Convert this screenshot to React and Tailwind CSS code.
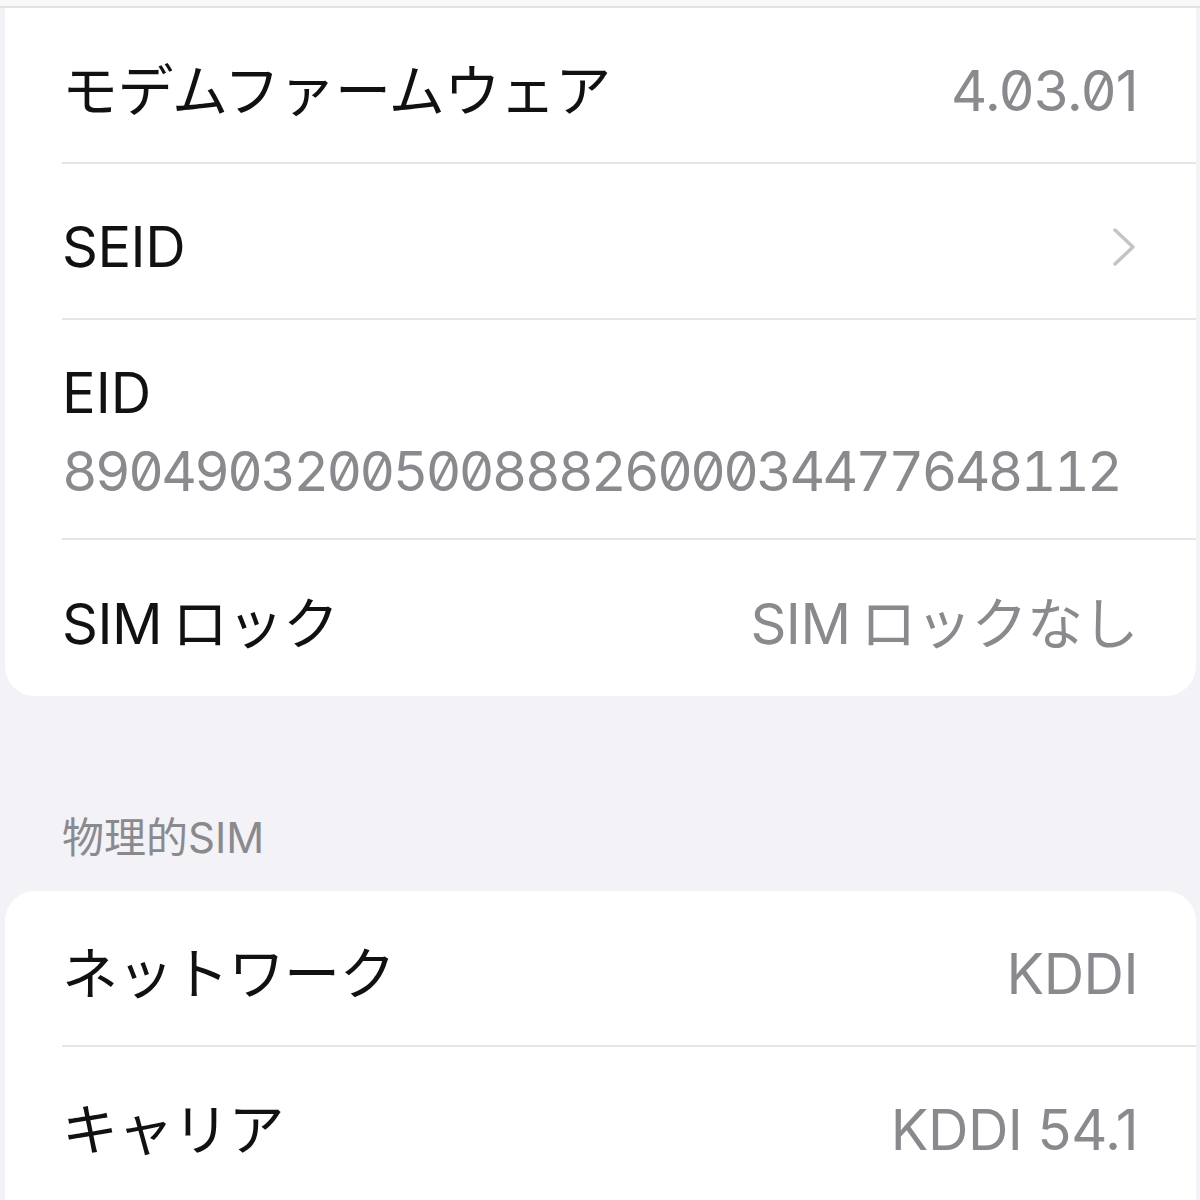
import React from 'react';

const font = { fontFamily: '"Inter", "Noto Sans CJK JP", sans-serif' };

function Chevron() {
    return (
        <svg width="26" height="40" viewBox="0 0 26 40" fill="none" className="mr-[1px]">
            <path d="M4 3 L22 20 L4 37" stroke="#c4c4c7" strokeWidth="3.5" strokeLinecap="round" strokeLinejoin="round" />
        </svg>
    );
}

// "SIMロック" has a small gap between the latin and the kana in the original
function SimLock({ suffix = '' }) {
    return (
        <>
            SIM<span className="ml-[10px]">ロック{suffix}</span>
        </>
    );
}

function Row({ label, value, chevron, last }) {
    return (
        <div className={`flex h-[156px] items-center justify-between pr-[58px] pt-[12px] ${last ? '' : 'border-b-2 border-[#e6e6e9]'}`}>
            <span className="text-[56px] text-[#111111] tracking-[-0.5px]">{label}</span>
            {value && <span className="text-[56px] text-[#8a8a8e] slashed-zero tracking-[-0.5px]">{value}</span>}
            {chevron && <Chevron />}
        </div>
    );
}

function App() {
    return (
        <div className="min-h-[1200px] w-[1200px] overflow-hidden bg-[#f2f2f7]" style={font}>
            <div className="h-[8px] border-b-2 border-[#e2e2e5] bg-[#f8f8f9]" />

            <div className="ml-[5px] mr-[4px] rounded-b-[30px] bg-white pl-[57px]">
                <Row label="モデムファームウェア" value="4.03.01" />
                <Row label="SEID" chevron />
                <div className="flex h-[220px] flex-col justify-center border-b-2 border-[#e6e6e9] pr-[58px] pt-[6px]">
                    <span className="text-[56px] leading-[78px] text-[#111111]">EID</span>
                    <span className="text-[55px] leading-[78px] text-[#8a8a8e] slashed-zero tabular-nums tracking-[-2.6px]">
                        89049032005008882600034477648112
                    </span>
                </div>
                <Row label={<SimLock />} value={<SimLock suffix="なし" />} last />
            </div>

            <div className="pl-[62px] pt-[118px] text-[42px] leading-[48px] text-[#8a8a8e]">物理的SIM</div>

            <div className="mt-[29px] ml-[5px] mr-[4px] rounded-t-[30px] bg-white pl-[57px]">
                <Row label="ネットワーク" value="KDDI" />
                <Row label="キャリア" value="KDDI 54.1" />
            </div>
        </div>
    );
}

export default App;
